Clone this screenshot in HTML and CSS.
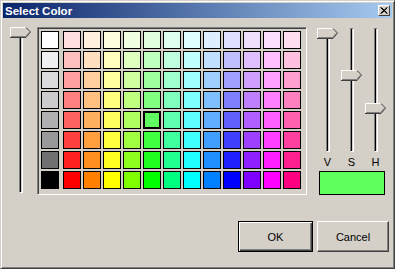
FILE: index.html
```html
<!DOCTYPE html>
<html lang="en">

<head>
    <meta charset="UTF-8">
    <title>Select Color</title>
    <link rel="stylesheet" href="styles.css">
</head>

<body>
    <div class="window">
        <!-- Title bar -->
        <div class="titlebar">
            <span class="title">Select Color</span>
            <span class="close">
                <svg width="8" height="7" viewBox="0 0 8 7"><path d="M0.5 0.5 L7 6.5 M1.5 0.5 L7.5 6.5 M7 0.5 L0.5 6.5 M7.5 0.5 L1.5 6.5" stroke="#000" stroke-width="1"/></svg>
            </span>
        </div>

        <div class="main">
            <!-- Brightness slider -->
            <div class="slider slider-left">
                <div class="track track-long"></div>
                <svg class="thumb thumb-top" width="22" height="11" viewBox="0 0 22 11">
                    <polygon points="0,0 16,0 21,5 16,10 0,10" fill="#d4d0c8"/>
                    <path d="M0.5 10 V0.5 H16" stroke="#fff" fill="none"/>
                    <path d="M16 0.5 L20.5 5" stroke="#404040" fill="none"/>
                    <path d="M20.5 5 L16 10.5 H0" stroke="#404040" fill="none"/>
                    <path d="M1 9.5 H15.5 L19.5 5" stroke="#808080" fill="none"/>
                </svg>
            </div>

            <!-- Palette -->
            <div class="frame">
                <div class="palette" id="palette"></div>
            </div>

            <!-- V / S / H sliders and preview -->
            <div class="side">
                <div class="sliders">
                    <div class="slider">
                        <div class="track"></div>
                        <svg class="thumb thumb-v" width="22" height="11" viewBox="0 0 22 11">
                            <polygon points="0,0 16,0 21,5 16,10 0,10" fill="#d4d0c8"/>
                            <path d="M0.5 10 V0.5 H16" stroke="#fff" fill="none"/>
                            <path d="M16 0.5 L20.5 5" stroke="#404040" fill="none"/>
                            <path d="M20.5 5 L16 10.5 H0" stroke="#404040" fill="none"/>
                            <path d="M1 9.5 H15.5 L19.5 5" stroke="#808080" fill="none"/>
                        </svg>
                        <span class="label">V</span>
                    </div>
                    <div class="slider">
                        <div class="track"></div>
                        <svg class="thumb thumb-s" width="22" height="11" viewBox="0 0 22 11">
                            <polygon points="0,0 16,0 21,5 16,10 0,10" fill="#d4d0c8"/>
                            <path d="M0.5 10 V0.5 H16" stroke="#fff" fill="none"/>
                            <path d="M16 0.5 L20.5 5" stroke="#404040" fill="none"/>
                            <path d="M20.5 5 L16 10.5 H0" stroke="#404040" fill="none"/>
                            <path d="M1 9.5 H15.5 L19.5 5" stroke="#808080" fill="none"/>
                        </svg>
                        <span class="label">S</span>
                    </div>
                    <div class="slider">
                        <div class="track"></div>
                        <svg class="thumb thumb-h" width="22" height="11" viewBox="0 0 22 11">
                            <polygon points="0,0 16,0 21,5 16,10 0,10" fill="#d4d0c8"/>
                            <path d="M0.5 10 V0.5 H16" stroke="#fff" fill="none"/>
                            <path d="M16 0.5 L20.5 5" stroke="#404040" fill="none"/>
                            <path d="M20.5 5 L16 10.5 H0" stroke="#404040" fill="none"/>
                            <path d="M1 9.5 H15.5 L19.5 5" stroke="#808080" fill="none"/>
                        </svg>
                        <span class="label">H</span>
                    </div>
                </div>
                <div class="swatch"></div>
            </div>
        </div>

        <!-- Buttons -->
        <div class="buttons">
            <button class="btn btn-default">OK</button>
            <button class="btn btn-cancel">Cancel</button>
        </div>
    </div>

    <script>
        // grey column values, top to bottom
        const greys = [255, 240, 220, 204, 176, 153, 112, 0];
        const selected = { row: 4, col: 4 };
        const palette = document.getElementById('palette');

        function hsv(h, s, v) {
            const i = Math.floor(h / 60) % 6;
            const f = h / 60 - Math.floor(h / 60);
            const p = v * (1 - s);
            const q = v * (1 - f * s);
            const t = v * (1 - (1 - f) * s);
            const map = [[v, t, p], [q, v, p], [p, v, t], [p, q, v], [t, p, v], [v, p, q]][i];
            return 'rgb(' + map.map(c => Math.round(c * 255)).join(',') + ')';
        }

        for (let r = 0; r < 8; r++) {
            const g = document.createElement('div');
            g.className = 'cell';
            g.style.background = 'rgb(' + greys[r] + ',' + greys[r] + ',' + greys[r] + ')';
            palette.appendChild(g);
            for (let c = 0; c < 12; c++) {
                const cell = document.createElement('div');
                cell.className = 'cell';
                if (r === selected.row && c === selected.col) cell.className += ' selected';
                cell.style.background = hsv(c * 30, (r + 1) / 8, 1);
                palette.appendChild(cell);
            }
        }
    </script>
</body>

</html>
```

FILE: styles.css
```css
body {
    margin: 0;
    padding: 0;
    background: #d4d0c8;
    font-family: 'Liberation Sans', Arial, sans-serif;
    font-size: 11px;
}

/* Window frame */
.window {
    width: 395px;
    height: 269px;
    box-sizing: border-box;
    background: #d4d0c8;
    border: 1px solid;
    border-color: #d4d0c8 #404040 #404040 #d4d0c8;
    box-shadow: inset 1px 1px #fff, inset -1px -1px #808080;
    padding: 2px;
}

.titlebar {
    height: 15px;
    display: flex;
    align-items: center;
    justify-content: space-between;
    padding-left: 2px;
    background: linear-gradient(to right, #0a246a, #a6caf0);
}
.title {
    color: #fff;
    font-weight: bold;
    font-size: 11.5px;
}
.close {
    width: 12px;
    height: 11px;
    box-sizing: border-box;
    margin-right: 2px;
    display: flex;
    align-items: center;
    justify-content: center;
    background: #d4d0c8;
    border: 1px solid;
    border-color: #fff #404040 #404040 #fff;
}

.main {
    display: flex;
    align-items: flex-start;
    margin-top: 9px;
    padding-left: 7px;
}

/* Trackbars */
.slider {
    position: relative;
    width: 22px;
    display: flex;
    flex-direction: column;
}
.track {
    width: 2px;
    height: 122px;
    margin-left: 9px;
    margin-top: 1px;
    border: 1px solid;
    border-color: #808080 #fff #fff #808080;
    background: linear-gradient(to right, #000 1px, #d4d0c8 1px);
}
.track-long {
    height: 164px;
    margin-top: 0;
}
.thumb {
    position: absolute;
    left: 0;
    display: block;
}
.thumb-top { top: 0; }
.thumb-v { top: 1px; }
.thumb-s { top: 43px; }
.thumb-h { top: 76px; }
.label {
    text-align: center;
    margin-left: -1px;
    margin-top: 4px;
    line-height: 13px;
    height: 13px;
}

/* Palette */
.frame {
    margin-left: 5px;
    border: 1px solid;
    border-color: #808080 #fff #fff #808080;
    box-shadow: inset 1px 1px #404040, inset -1px -1px #d4d0c8;
    padding: 3px 5px 5px 3px;
}
.palette {
    display: grid;
    grid-template-columns: 20px repeat(12, 18px);
    grid-auto-rows: 18px;
    gap: 2px;
}
.cell {
    width: 18px;
    height: 18px;
    box-sizing: border-box;
    border: 1px solid #000;
}
.cell.selected {
    border-width: 2px;
}

/* Right side */
.side {
    margin-left: 10px;
    margin-top: 0;
}
.sliders {
    display: flex;
    gap: 2px;
}
.swatch {
    width: 66px;
    height: 24px;
    box-sizing: border-box;
    margin-left: 2px;
    margin-top: 2px;
    border: 1px solid #000;
    background: #60ff60;
}

/* Buttons */
.buttons {
    display: flex;
    justify-content: flex-end;
    gap: 4px;
    margin-top: 26px;
    padding-right: 3px;
}
.btn {
    height: 31px;
    box-sizing: border-box;
    background: #d4d0c8;
    font-family: 'Liberation Sans', Arial, sans-serif;
    font-size: 11px;
    color: #000;
    padding: 0;
}
.btn-default {
    width: 75px;
    border: 1px solid #000;
    box-shadow: inset 1px 1px #fff, inset -1px -1px #404040, inset -2px -2px #808080;
}
.btn-cancel {
    width: 72px;
    border: 1px solid;
    border-color: #fff #404040 #404040 #fff;
    box-shadow: inset -1px -1px #808080;
}
```
